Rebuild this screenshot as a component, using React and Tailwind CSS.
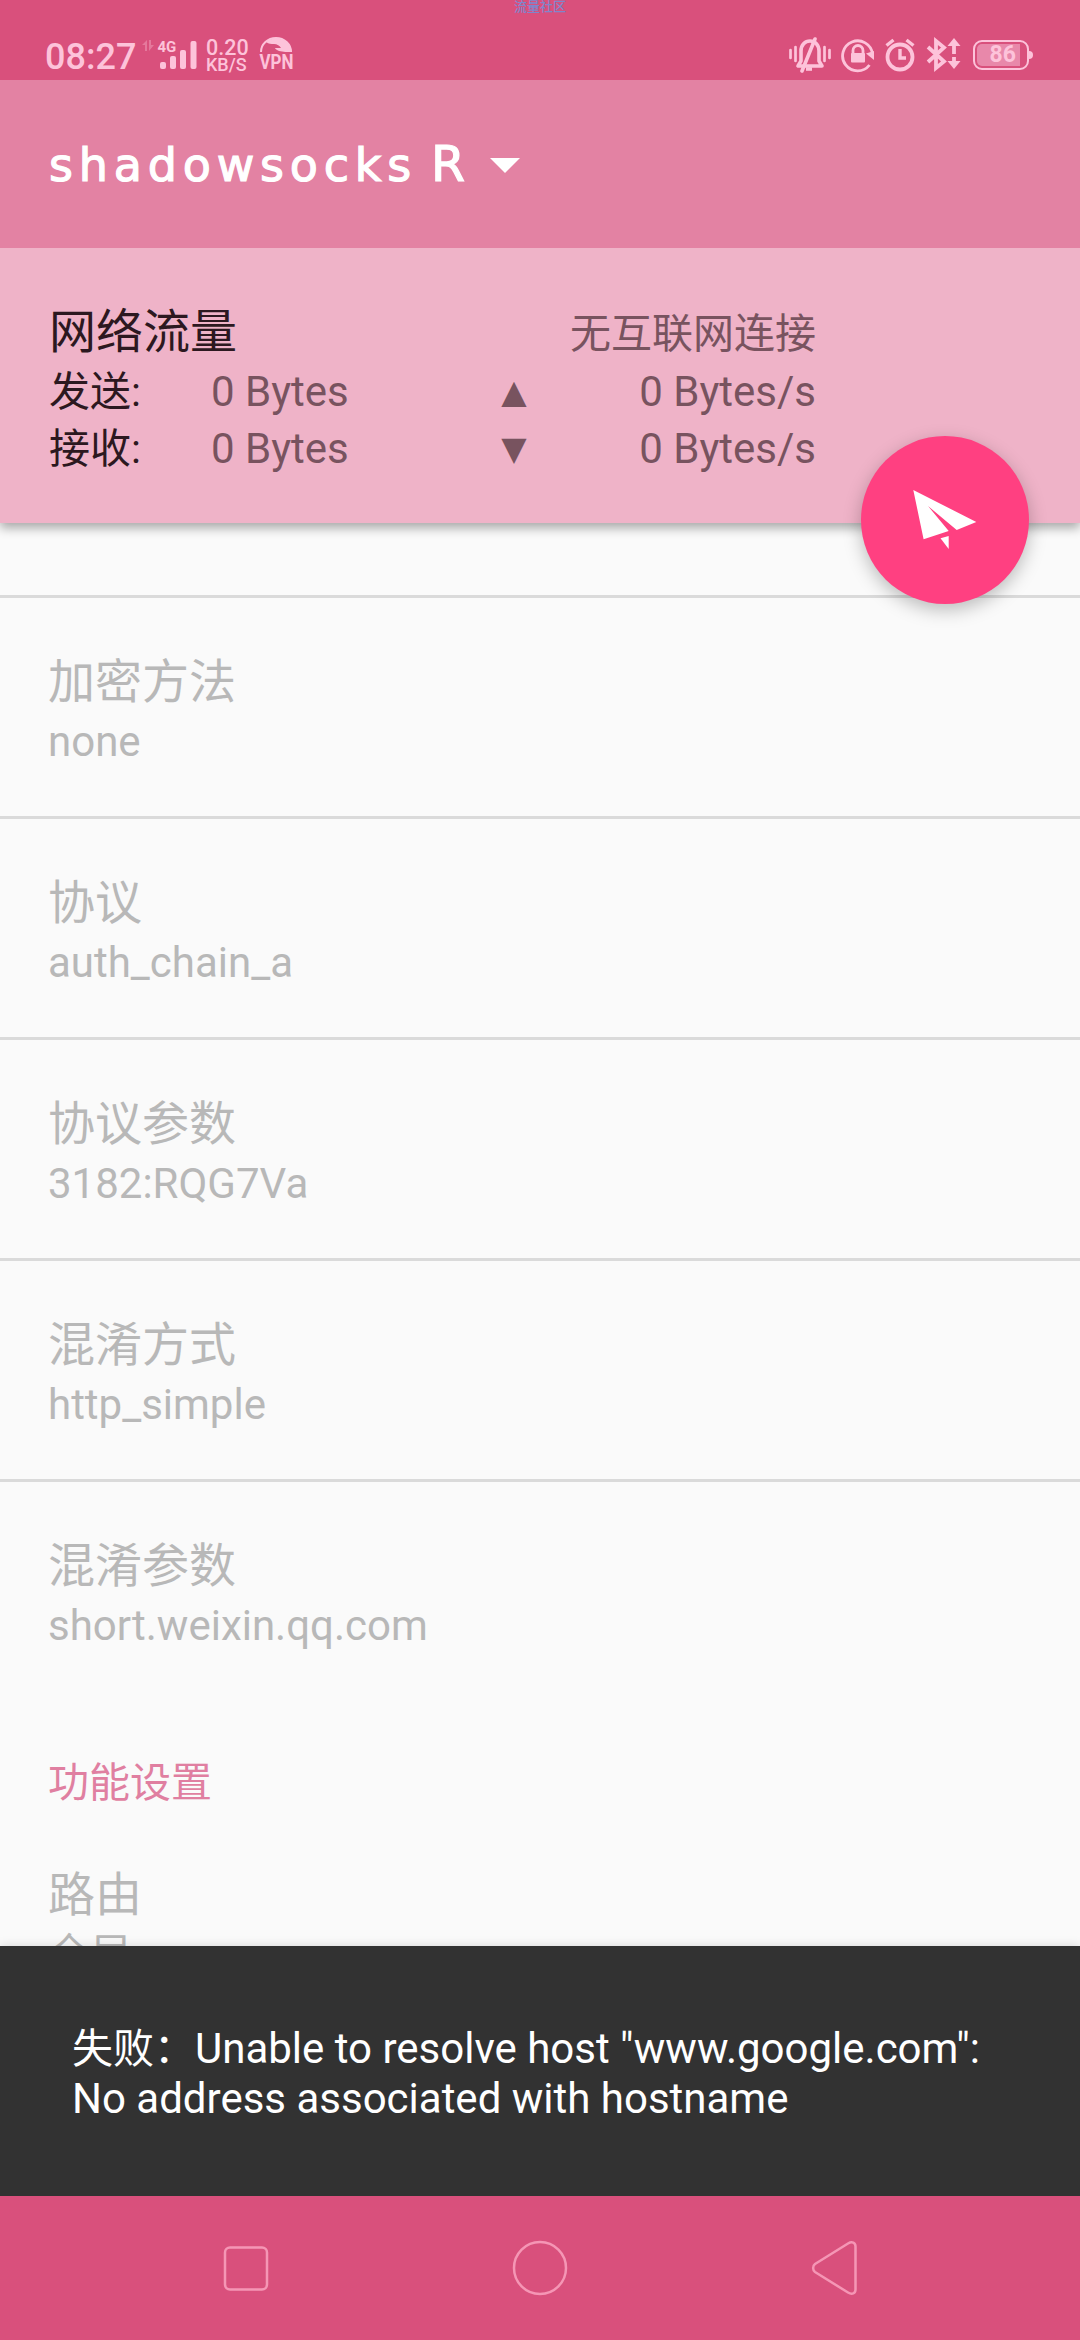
const preferences = [
  { title: '加密方法', summary: 'none' },
  { title: '协议', summary: 'auth_chain_a' },
  { title: '协议参数', summary: '3182:RQG7Va' },
  { title: '混淆方式', summary: 'http_simple' },
  { title: '混淆参数', summary: 'short.weixin.qq.com' },
];

function StatusBar() {
  return (
    <header className="relative flex h-[80px] shrink-0 items-end bg-[#d9507c] text-[#fdc3da]">
      {/* Carrier watermark */}
      <span className="absolute left-[514px] top-0 text-[13px] font-medium leading-[13px] text-[#7f86cc]">
        流量社区
      </span>

      <span className="ml-[45px] w-[97px] text-[36px] font-medium leading-[46px]">08:27</span>

      {/* Mobile data */}
      <svg className="mb-[10px] h-[32px] w-[56px] overflow-visible" viewBox="142 38 56 32" fill="currentColor">
        <path
          d="M142 45l5-5v11h-2v-6zM154 45l-5 6V40h2v5z"
          opacity="0.35"
        />
        <text x="157.500" y="52" fontSize="15" fontWeight="700">4G</text>
        <rect x="160" y="62" width="6" height="7" rx="2" />
        <rect x="170" y="56" width="6" height="13" rx="2" />
        <rect x="180" y="50" width="6" height="19" rx="2" />
        <rect x="190.500" y="41" width="6" height="28" rx="2" />
      </svg>

      {/* Network speed */}
      <div className="mb-[7px] ml-[8px] flex w-[52px] flex-col font-medium">
        <span className="text-[21.500px] leading-[17px]">0.20</span>
        <span className="text-[18px] leading-[17px]">KB/S</span>
      </div>

      {/* VPN */}
      <svg className="mb-[10px] h-[34px] w-[36px] overflow-visible" viewBox="258 36 36 34" fill="none" stroke="currentColor">
        <path d="M261 52a15 14 0 0 1 30 0" strokeWidth="2" />
        <path
          d="M266 42c4-4 14-5 20 0 3 2 5 6 6 10-4 0-9 0-13-1-2-1-4-2-4-3h6c-1-2-4-4-7-4-3 0-5 0-8-2z"
          fill="currentColor"
          stroke="none"
        />
        <text x="259.500" y="69" fontSize="20.500" fontWeight="700" fill="currentColor" stroke="none" textLength="34" lengthAdjust="spacingAndGlyphs">VPN</text>
      </svg>

      <div className="mb-[7px] ml-auto mr-[47px] flex items-center">
        {/* Muted + vibrate */}
        <svg className="h-[36px] w-[44px]" viewBox="786 37 44 36" fill="none" stroke="currentColor" strokeWidth="3.600">
          <path d="M789.500 50v8M794.500 47v14M823.500 47v14M828.500 50v8" strokeWidth="2.700" strokeLinecap="round" />
          <path d="M797 66h24l-3-5V51c0-6-4-10-9-10s-9 4-9 10v10z" strokeLinejoin="round" />
          <path d="M814 39L801 71" strokeLinecap="round" />
          <path d="M805 69h6" />
        </svg>
        {/* Rotation lock */}
        <svg className="ml-[10px] h-[36px] w-[36px]" viewBox="840 37 36 36" fill="none" stroke="currentColor" strokeWidth="2.800">
          <path d="M868.500 65A15 15 0 1 1 871.500 54" />
          <path d="M865 53.500l8-2.500v9z" fill="currentColor" stroke="none" />
          <path d="M852 54v-3.500a5 5 0 0 1 10 0V54" />
          <rect x="850" y="53" width="14" height="9.500" rx="1" fill="currentColor" stroke="none" />
        </svg>
        {/* Alarm */}
        <svg className="ml-[6px] h-[36px] w-[34px]" viewBox="882 37 34 36" fill="none" stroke="currentColor" strokeWidth="3.800">
          <circle cx="899" cy="57" r="12.500" />
          <path d="M899 49v9h6" strokeWidth="3.400" />
          <path d="M885.500 45.500l7-5.500M912.500 45.500l-7-5.500" strokeWidth="3.400" />
        </svg>
        {/* Bluetooth with transfer arrows */}
        <svg className="ml-[8px] h-[36px] w-[36px]" viewBox="924 37 36 36" fill="none" stroke="currentColor" strokeWidth="3.800">
          <path d="M927 47l16 14.500-8 6.500V41l8 6.500L927 62" />
          <path d="M953 54V44M953 57v9" />
          <path d="M946.500 46l6.500-8 6.500 8zM946.500 61l6.500 8 6.500-8z" fill="currentColor" stroke="none" />
        </svg>
        {/* Battery */}
        <div className="ml-[12px] flex items-center">
          <div className="h-[30px] w-[56px] rounded-[9px] border-2 border-[#fdc3da] p-[2px]">
            <div className="flex h-[22px] w-[43px] items-center justify-end rounded-l-[5px] bg-[#e888aa] pr-[4px] text-[23px] font-bold leading-[22px]">
              86
            </div>
          </div>
          <div className="h-[8px] w-[4px] rounded-r-sm bg-[#fdc3da]" />
        </div>
      </div>
    </header>
  );
}

function Toolbar() {
  return (
    <div className="relative z-20 flex h-[168px] shrink-0 items-center bg-[#e382a3] pl-[49px] text-white">
      <h1 className="flex w-[441px] items-baseline whitespace-nowrap pt-[2px] font-['DejaVu_Sans'] text-[46px] leading-[60px] [-webkit-text-stroke:1.2px_white]">
        <span className="w-[382px] tracking-[5.800px]">shadowsocks</span>{' '}
        <span className="text-[49px]">R</span>
      </h1>
      <svg className="mt-[3px] h-[16px] w-[30px]" viewBox="0 0 30 16" fill="currentColor">
        <path d="M0 0h30L15 15z" />
      </svg>
    </div>
  );
}

function TrafficRow({ label, total, arrow, rate }) {
  return (
    <div className="flex h-[57px] text-[42px] leading-[54px]">
      <span className="w-[162px] text-[41px] leading-[55px] text-[#2c1820]">{label}</span>
      <span className="w-[240px]">{total}</span>
      <span className="w-[126px] text-center font-['DejaVu_Sans'] text-[33px] leading-[54px]">{arrow}</span>
      <span className="flex-1 text-right">{rate}</span>
    </div>
  );
}

function TrafficCard() {
  return (
    <section className="relative z-10 h-[275px] shrink-0 bg-[#efb3c8] pl-[49px] pr-[264px] pt-[53px] text-[#78535f] shadow-[0_5px_10px_rgba(0,0,0,0.33)]">
      <div className="flex items-baseline justify-between leading-[61px]">
        <h2 className="text-[47px] text-[#2c1820]">网络流量</h2>
        <span className="text-[41px]">无互联网连接</span>
      </div>
      <TrafficRow label="发送:" total="0 Bytes" arrow="▲" rate="0 Bytes/s" />
      <TrafficRow label="接收:" total="0 Bytes" arrow="▼" rate="0 Bytes/s" />

      {/* Connect button */}
      <button className="absolute right-[51px] top-[188px] h-[168px] w-[168px] rounded-full bg-[#ff4081] shadow-[0_6px_18px_rgba(0,0,0,0.25)]">
        <svg className="h-[168px] w-[168px]" viewBox="861 436 168 168" fill="white">
          <path d="M913.300 490l63 32-19.600 8L928 506l20.700 25-25.100 8.300z" />
          <path d="M940.500 538.300l8.200-2.300v13z" />
        </svg>
      </button>
    </section>
  );
}

function Preference({ title, summary, last }) {
  return (
    <div
      className={`h-[221px] shrink-0 border-b-[3px] pl-[48px] pt-[55px] text-[#b8b8b8] ${
        last ? 'border-transparent' : 'border-[#dadada]'
      }`}
    >
      <div className="text-[47px] leading-[58px]">{title}</div>
      <div className="text-[42px] leading-[62px]">{summary}</div>
    </div>
  );
}

function Snackbar() {
  return (
    <div className="relative z-10 flex h-[250px] shrink-0 flex-col justify-center bg-[#323232] pl-[72px] pt-[5px] text-[42px] leading-[49px] text-white shadow-[0_0_10px_rgba(0,0,0,0.15)]">
      <p>
        <span className="text-[41px]">失败：</span>Unable to resolve host "www.google.com":
      </p>
      <p>No address associated with hostname</p>
    </div>
  );
}

function NavigationBar() {
  return (
    <nav className="relative z-20 flex h-[144px] shrink-0 items-center justify-between bg-[#d9507c] pl-[219px] pr-[219px] text-[#f596b5]">
      <svg className="h-[54px] w-[54px]" viewBox="0 0 54 54" fill="none" stroke="currentColor" strokeWidth="2.500">
        <rect x="6" y="6.500" width="42" height="42" rx="5" />
      </svg>
      <svg className="h-[56px] w-[56px]" viewBox="0 0 56 56" fill="none" stroke="currentColor" strokeWidth="2.500">
        <circle cx="28" cy="28" r="26" />
      </svg>
      <svg className="h-[54px] w-[54px]" viewBox="806 2241 54 54" fill="none" stroke="currentColor" strokeWidth="2.500" strokeLinejoin="round">
        <path d="M814 2264l33-20.500c4-2.500 7.500-1 7.500 3v43c0 4-3.500 5.500-7.500 3l-33-20.500c-2.500-2-2.500-6 0-8z" />
      </svg>
    </nav>
  );
}

export default function App() {
  return (
    <div className="flex h-[2340px] w-[1080px] flex-col overflow-hidden bg-[#fafafa] font-['Roboto','Noto_Sans_CJK_SC',sans-serif]">
      <StatusBar />
      <Toolbar />
      <TrafficCard />
      <main className="flex min-h-0 flex-1 flex-col overflow-hidden">
        <div className="h-[75px] shrink-0 border-b-[3px] border-[#dadada]" />
        {preferences.map((item, index) => (
          <Preference
            key={item.title}
            title={item.title}
            summary={item.summary}
            last={index === preferences.length - 1}
          />
        ))}
        <h3 className="shrink-0 pl-[48px] pt-[53px] text-[41px] leading-[55px] text-[#e07fa1]">功能设置</h3>
        <Preference title="路由" summary="全局" last />
      </main>
      <Snackbar />
      <NavigationBar />
    </div>
  );
}
